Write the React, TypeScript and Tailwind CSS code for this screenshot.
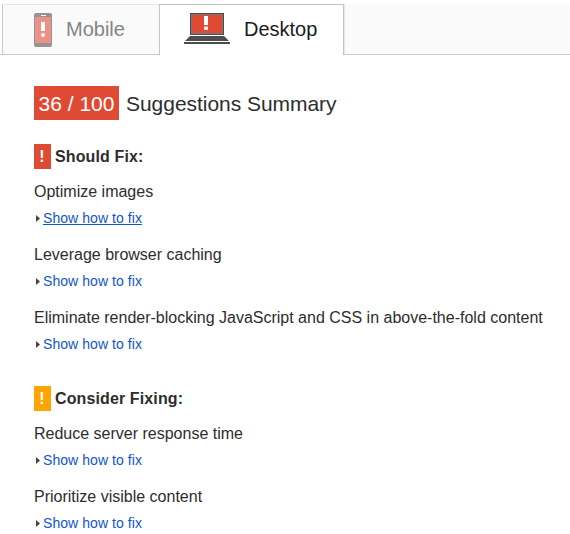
import React from 'react';

interface Rule {
  title: string;
  underlined?: boolean;
}

interface RuleGroup {
  heading: string;
  badge: string;
  rules: Rule[];
}

const groups: RuleGroup[] = [
  {
    heading: 'Should Fix:',
    badge: 'bg-[#df4a35]',
    rules: [
      { title: 'Optimize images', underlined: true },
      { title: 'Leverage browser caching' },
      { title: 'Eliminate render-blocking JavaScript and CSS in above-the-fold content' },
    ],
  },
  {
    heading: 'Consider Fixing:',
    badge: 'bg-[#ffa400]',
    rules: [{ title: 'Reduce server response time' }, { title: 'Prioritize visible content' }],
  },
];

const PhoneIcon = () => (
  <svg width="18" height="34" viewBox="0 0 18 34" className="block shrink-0">
    <rect width="18" height="34" rx="2" fill="#949494" />
    <rect x="1" y="4" width="16" height="26" fill="#ec9185" />
    <rect x="7" y="2" width="5" height="1" fill="#fff" />
    <rect x="7" y="9" width="4" height="9" fill="#fff" />
    <circle cx="9" cy="22" r="2.1" fill="#fff" />
  </svg>
);

const LaptopIcon = () => (
  <svg width="46" height="31" viewBox="0 0 46 31" className="block shrink-0">
    <rect x="6" width="34" height="22" fill="#4d4d4d" />
    <rect x="7" y="1" width="32" height="20" fill="#777" />
    <rect x="8" y="2" width="30" height="18" fill="#df4a35" />
    <rect x="20" y="3" width="4" height="9" fill="#fff" />
    <rect x="20" y="13.5" width="4" height="3.5" rx="1" fill="#fff" />
    <path d="M6 23h34l5 5H1z" fill="#4d4d4d" />
    <rect y="29" width="46" height="2" fill="#4d4d4d" />
  </svg>
);

const Tabs = () => (
  <div className="flex h-[51px] mt-1">
    <div className="w-[2px] border-b border-[#ccc]" />
    <div className="flex w-[157px] items-start border-y border-b-[#ccc] border-l border-l-[#ccc] border-t-[#e6e6e6] bg-[#fafafa] pl-[31px] pt-2 text-[20px] leading-[32px] text-[#848484]">
      <PhoneIcon />
      <span className="ml-[14px]">Mobile</span>
    </div>
    <div className="flex w-[185px] items-start border-x border-t border-[#c4c4c4] bg-white pl-6 pt-2 text-[20px] leading-[32px] text-[#1a1a1a]">
      <LaptopIcon />
      <span className="ml-[14px]">Desktop</span>
    </div>
    <div className="flex-1 border-b border-[#ccc] bg-[#fafafa] shadow-[inset_2px_0_1px_-1px_rgba(0,0,0,0.08)]" />
  </div>
);

const RuleItem = ({ title, underlined }: Rule) => (
  <li className="h-[63px]">
    <p className="whitespace-nowrap text-[16px] leading-[26px]">{title}</p>
    <div className="flex h-[26px] items-center pl-[2px]">
      <svg width="4" height="7" viewBox="0 0 4 7" className="block">
        <path d="M0 0v7l4-3.5z" fill="#444" />
      </svg>
      <a
        href="#"
        className={`ml-[3px] text-[14px] leading-[26px] tracking-[0.06px] text-[#15c] ${underlined ? 'underline' : ''}`}
      >
        Show how to fix
      </a>
    </div>
  </li>
);

export default function App() {
  return (
    <div className="flow-root h-[534px] w-[570px] overflow-hidden bg-white font-['Liberation_Sans',Arial,sans-serif] text-[#2d2d2d]">
      <Tabs />
      <main className="pl-[34px] pt-[31px]">
        <h1 className="flex h-[34px] items-center text-[21px] leading-[34px]">
          <span className="h-[34px] w-[85px] bg-[#df4a35] pt-px text-center text-white">36 / 100</span>
          <span className="ml-[7px] h-[34px] pt-px tracking-[-0.04px]">Suggestions Summary</span>
        </h1>
        <div className="flex flex-col gap-[18px] pt-6">
          {groups.map((group) => (
            <section key={group.heading}>
              <h2 className="flex h-[25px] items-center text-[16px] font-bold leading-[25px]">
                <span className={`w-[17px] pr-px text-center text-white ${group.badge}`}>!</span>
                <span className="ml-1 tracking-[0.12px]">{group.heading}</span>
              </h2>
              <ul className="pt-[10px]">
                {group.rules.map((rule) => (
                  <RuleItem key={rule.title} {...rule} />
                ))}
              </ul>
            </section>
          ))}
        </div>
      </main>
    </div>
  );
}
